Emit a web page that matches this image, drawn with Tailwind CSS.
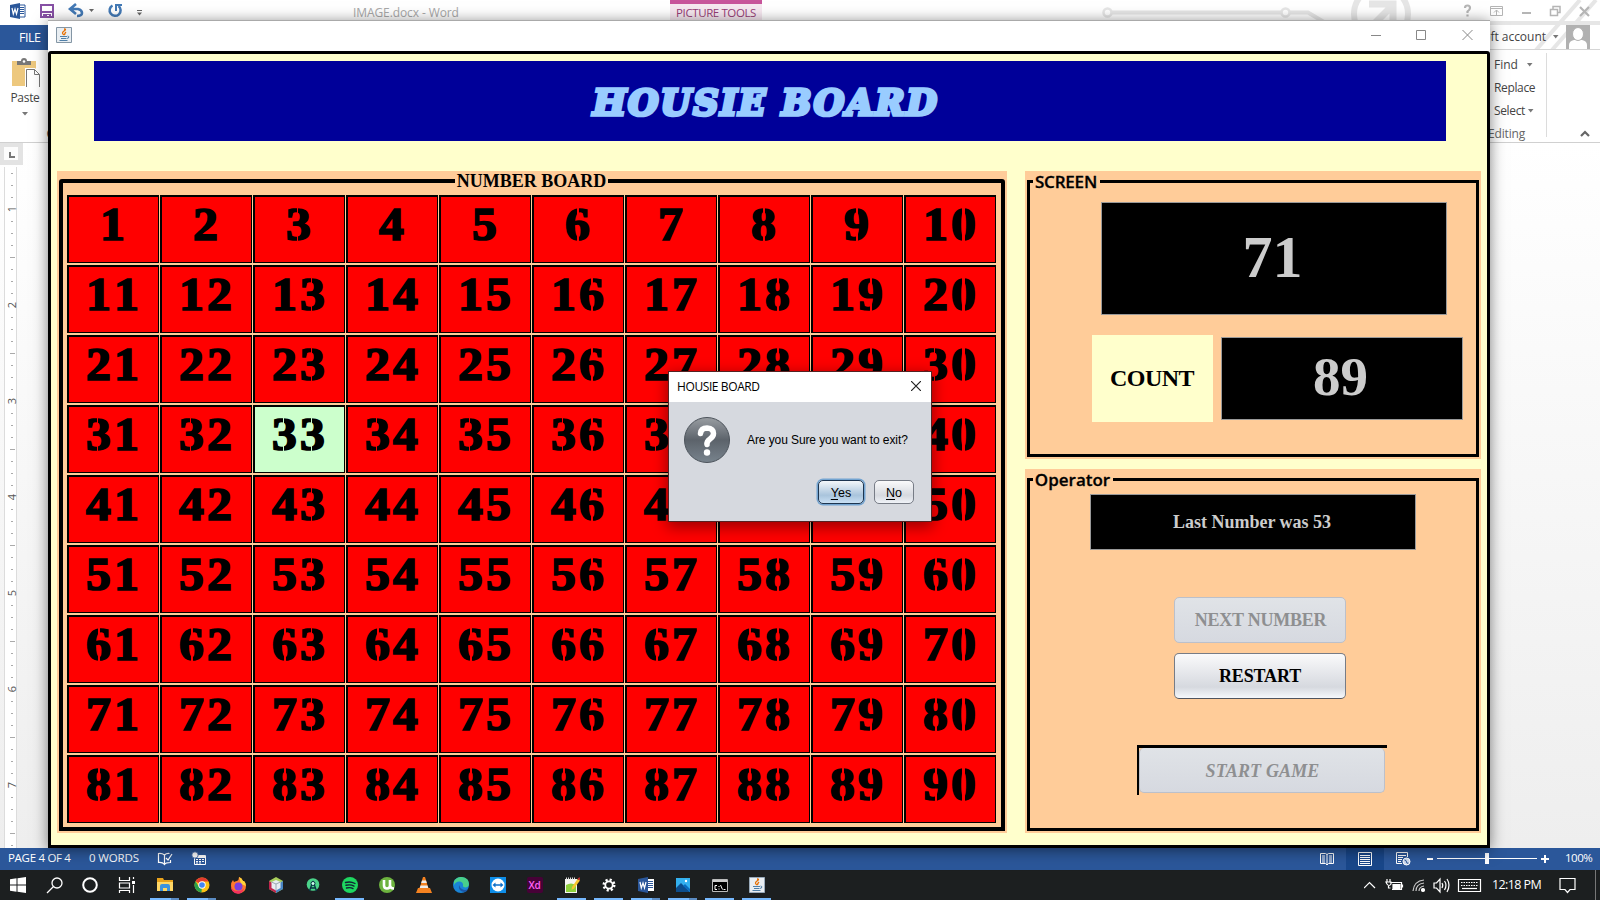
<!DOCTYPE html>
<html lang="en">
<head>
<meta charset="utf-8">
<title>Housie Board</title>
<script src="https://cdn.jsdelivr.net/npm/@tailwindcss/browser@4"></script>
</head>
<body class="relative w-[1600px] h-[900px] overflow-hidden bg-white font-['Open_Sans',sans-serif] text-[12px] text-[#444]">

<!-- Word window -->
<div class="flex flex-col h-[870px]">
  <header class="relative h-[25px] shrink-0 flex items-start bg-white">
    <svg class="absolute right-0 top-0" width="520" height="50" fill="none" stroke="#e6e6e6" stroke-width="4">
      <path d="M32 12.500H201M210 12.500H228L244 22M520 23H320Q312 23 312 32"/><circle cx="27.500" cy="12.500" r="4" stroke-width="2.500"/><circle cx="205.500" cy="12.500" r="4" stroke-width="2.500" fill="#fff"/>
      <circle cx="301" cy="14" r="27" stroke-width="6"/><path d="M286 32L311 7M289 4H313V24" stroke-width="7"/><path d="M456 50L500 0M472 50L516 0" stroke-width="4"/>
    </svg>
    <div class="flex items-start pt-[3px] pl-[10px]">
      <svg width="130" height="18" viewBox="0 0 130 18" fill="none">
        <path d="M8 2h7v12H8z" fill="#fff" stroke="#2b579a"/><path d="M9 4.500h5M9 6.500h5M9 8.500h5M9 10.500h5" stroke="#2b579a"/><path d="M0 2l10-2v16L0 14z" fill="#2b579a"/><path d="M2 5l1.300 6L5 6l1.500 5L8 5" stroke="#fff" stroke-width="1.200"/>
        <path d="M31 2h12v12H31z" fill="#fff" stroke="#8650a4" stroke-width="2"/><path d="M31 8h12v2H31zM33 11h8v4h-2v-3h-2v3h-4z" fill="#8650a4"/>
        <path d="M60 6h8q4 1 4 4t-5 3M66 1l-6 5 6 5" stroke="#4379b5" stroke-width="2.600"/><path d="M79 6h5l-2.500 3z" fill="#666"/>
        <path d="M102.500 2.500a5.500 5.500 0 1 0 6 .5" stroke="#4379b5" stroke-width="2.500"/><path d="M112 2h-6v6" stroke="#4379b5" stroke-width="2"/>
      </svg>
      <svg class="-ml-[3px]" width="8" height="18"><path d="M0 7.500h5" stroke="#666"/><path d="M0 9.500h5l-2.500 3z" fill="#666"/></svg>
    </div>
    <span class="ml-[208px] mt-[4px] leading-[17px] text-[#a8a8a8] whitespace-nowrap w-[106px] tracking-[-0.100px]">IMAGE.docx - Word</span>
    <div class="ml-[211px] w-[92px] h-[25px] bg-[#f6e8f0] border-t-4 border-[#c8559b] text-center text-[11.500px] leading-[18px] text-[#963d76] whitespace-nowrap tracking-[-0.400px]">PICTURE TOOLS</div>
    <svg class="absolute right-[6px] top-[4px]" width="132" height="16" fill="none" stroke="#b5b5b5" stroke-width="1.500">
      <path d="M3 4q0-2.500 2.500-2.500T8 4q0 1.500-2.500 3.500V9M5.500 10.500v2" stroke-width="2.200"/><path d="M28.500 2.500h12v9h-12zM28 4.500h13M34.500 11V6M32 8.500L34.500 6 37 8.500" stroke-width="1"/>
      <path d="M60 9h9" stroke-width="2"/><path d="M88.500 5.500h7v6h-7zM91 5V2.500h7v6h-2"/><path d="M118 3l9 9M127 3l-9 9" stroke-width="2.200"/>
    </svg>
  </header>
  <div class="h-[25px] shrink-0 flex items-center justify-between border-b border-[#d5d5d5] relative">
    <div class="bg-[#2b579a] text-white w-[60px] h-[25px] pl-[19px] text-[12.500px] leading-[25px] tracking-[-0.500px]">FILE</div>
    <div class="flex items-center gap-[7px] pr-[10px]"><span class="text-[#444] whitespace-nowrap tracking-[-0.020px]">Microsoft account</span><svg width="6" height="4"><path d="M0 0h5.500L2.700 3.500z" fill="#777"/></svg>
      <svg width="24" height="24"><path d="M0 0h24v24H0z" fill="#b1b1b1"/><path d="M3 24v-4q0-4 5-5h8q5 1 5 5v4z" fill="#fff"/><ellipse cx="12" cy="9" rx="5.500" ry="6.500" fill="#fff" stroke="#b1b1b1"/></svg></div>
  </div>
  <div class="h-[93px] shrink-0 flex justify-between border-b border-[#d0d0d0]">
    <div class="flex flex-col items-center w-[50px] pt-[8px]">
      <svg class="ml-[4px]" width="30" height="32"><path d="M0 3h24v25H0z" fill="#edc87e"/><path d="M5 7V3h4q0-3 3-3t3 3h4v4z" fill="#777"/><circle cx="12" cy="3.500" r="1.300" fill="#fff"/><path d="M13 10h10l6 6v15H13z" fill="#fff"/><path d="M14.500 11.500h8l5 5v13h-13z" fill="#fff" stroke="#777"/><path d="M22.500 11.500v5h5" fill="none" stroke="#777"/></svg>
      <span class="leading-[18px] text-[12px] tracking-[-0.300px] mt-[2px]">Paste</span>
      <svg class="mt-[5px] -ml-px" width="6" height="4"><path d="M0 0h6L3 3.500z" fill="#777"/></svg>
      <span class="self-end leading-[16px] mt-[10px] -mr-[4px]">C</span>
    </div>
    <div class="flex">
      <div class="w-[57px] border-r border-[#dcdcdc] mt-[3px] mb-[5px] mr-[-1px] flex flex-col text-[12px] leading-[23px] whitespace-nowrap">
        <span class="flex items-center gap-[9px] pl-[4px]">Find <svg width="6" height="4"><path d="M0 0h5.500L2.700 3.500z" fill="#777"/></svg></span>
        <span class="pl-[4px] tracking-[-0.350px]">Replace</span>
        <span class="flex items-center gap-[3px] pl-[4px] tracking-[-0.350px]">Select <svg width="6" height="4"><path d="M0 0h5.500L2.700 3.500z" fill="#777"/></svg></span>
        <span class="text-[#666] -ml-[2px] tracking-[-0.150px]">Editing</span>
      </div>
      <svg class="mt-[80px] ml-[34px] mr-[10px]" width="10" height="8"><path d="M1 6l4-4 4 4" fill="none" stroke="#666" stroke-width="2.200"/></svg>
    </div>
  </div>
  <div class="flex-1 min-h-0 bg-linear-to-b from-white to-[#eeeeee]">
    <svg id="ruler" width="50" height="705" font-family="Open Sans" font-size="11" fill="#555"><path d="M0 0h23v22H0z" fill="#e3e3e3"/><path d="M4 4h14v13H4z" fill="#fcfcfc"/><path d="M10 9v5h5" fill="none" stroke="#777" stroke-width="2"/><path d="M4 24h13v681H4z" fill="#fff"/><path d="M4.500 24v681M16.500 24v681" stroke="#dcdcdc"/></svg>
  </div>
  <footer class="h-[22px] shrink-0 bg-[#2b579a] text-white flex items-center justify-between text-[11.500px] leading-[16px] tracking-[-0.100px] whitespace-nowrap">
    <div class="flex items-center pl-[8px] gap-[17px]"><span class="w-[64px] -mt-[2px] tracking-[-0.300px]">PAGE 4 OF 4</span><span class="w-[51px] -mt-[2px] tracking-[-0.150px]">0 WORDS</span>
      <svg width="52" height="16" fill="none" stroke="#fff"><path d="M7.500 14V4Q5 2 1.500 2.500v9q4-.5 6 2 1-2 6-2V9M7.500 4q2-2 5-1.500M9 7l2 2 4-6" stroke-width="1.200"/><path d="M37.500 4.500h11v9h-11z"/><path d="M37 6h12" stroke-width="2"/><path d="M39 8.500h2M42 8.500h2M45 8.500h2M39 10.500h2M42 10.500h2M45 10.500h2M39 12h2M42 12h2"/><circle cx="38" cy="4" r="3.200" fill="#fff" stroke="#2b579a" stroke-width=".8"/></svg>
    </div>
    <div class="flex items-center h-full">
      <svg width="14" height="14" fill="none" stroke="#fff"><path d="M.5 1.500h5L7 2.500l1.500-1h5v10h-5L7 13l-1.500-1.500h-5zM7 2v10M2 4h3M2 6h3M2 8h3M2 10h3M9 4h3M9 6h3M9 8h3M9 10h3"/></svg>
      <div class="ml-[12px] w-[38px] h-full bg-[#19478a] flex items-center justify-center"><svg width="14" height="14" fill="none" stroke="#fff"><path d="M.5.500h13v13H.5zM2 3.500h10M2 5.500h10M2 7.500h10M2 9.500h10M2 11.500h10"/></svg></div>
      <svg class="ml-[12px]" width="15" height="14" fill="none" stroke="#fff"><path d="M11.500 5V.500H.5v11H6M2 3.500h8M2 5.500h5M2 7.500h4M2 9.500h3"/><circle cx="10.500" cy="9.500" r="3.500" fill="#cfdcf0"/><path d="M8.500 8q2 0 2 2t2 1" stroke="#2b579a"/></svg>
      <svg class="ml-[16px]" width="124" height="14"><path d="M0 6h6v2H0zM114 6h8v2h-8zM117 3h2v8h-2zM10 6h100v1H10zM58 1h4v11h-4z" fill="#fff"/></svg>
      <span class="ml-[14px] mr-[8px] -mt-[2px] w-[27px] tracking-[-0.500px]">100%</span>
    </div>
  </footer>
</div>

<!-- Taskbar -->
<div class="h-[30px] bg-[#1c1f20] flex items-stretch justify-between text-white">
  <div id="tasks" class="flex items-stretch">
    <div class="w-[36px] flex items-center justify-center"><svg width="16" height="16" fill="#fff"><path d="M0 2.200l6.500-.9v6.200H0zM7.500 1.200L16 0v7.500H7.500zM0 8.500h6.500v6.200L0 13.800zM7.500 8.500H16V16l-8.500-1.200z"/></svg></div>
    <div class="w-[36px] flex items-center justify-center"><svg width="17" height="17" fill="none" stroke="#fff" stroke-width="1.300"><circle cx="11" cy="6" r="5"/><path d="M7.500 9.500L1 16"/></svg></div>
    <div class="w-[36px] flex items-center justify-center"><svg width="16" height="16"><circle cx="8" cy="8" r="6.800" fill="none" stroke="#fff" stroke-width="2"/></svg></div>
    <div class="w-[38px] flex items-center justify-center"><svg width="18" height="16" fill="none" stroke="#fff" stroke-width="1.200"><path d="M1.500 0v3.500h10V0M1.500 6h10v5h-10zM1.500 16v-2.500h10V16M15.500 0v2M15.500 8v8"/><path d="M14 4h3v3h-3z" fill="#fff" stroke="none"/></svg></div>
    <div class="w-[37px] relative flex items-center justify-center"><svg width="16" height="16"><path d="M0 1h6l1 2h9v4H0z" fill="#e9a21b"/><path d="M0 5h16v9H0z" fill="#ffd765"/><path d="M3 14V9q0-2 2-2h6q2 0 2 2v5h-3v-3H6v3z" fill="#3c93de"/></svg><i class="absolute bottom-0 inset-x-[4px] h-[2px] bg-[#76b9ff] border-r-8 border-[#5b8cc4]"></i></div>
    <div class="w-[37px] relative flex items-center justify-center"><svg width="16" height="16"><circle cx="8" cy="8" r="7.500" fill="#fbc116"/><path d="M8 8L1.500 4.200A7.500 7.500 0 0 1 14.700 4.600H8z" fill="#e33b2e"/><path d="M8 8l-.5 7.500A7.500 7.500 0 0 1 1.500 4.200L5 10z" fill="#29a04c"/><circle cx="8" cy="8" r="3.700" fill="#fff"/><circle cx="8" cy="8" r="2.800" fill="#4285f4"/></svg><i class="absolute bottom-0 inset-x-[4px] h-[2px] bg-[#76b9ff] border-r-8 border-[#5b8cc4]"></i></div>
    <div class="w-[37px] flex items-center justify-center"><svg width="17" height="17"><path d="M1 9q0-4 2-6l1 2q2-1 3-1 2-1 2-4 3 1 4 4l1 0q2 2 2 5 0 7-7.500 7.500Q1 16 1 9z" fill="#ff7a2b"/><path d="M9 0q3 1 4 4l1 0q2 2 2 5L11 7z" fill="#ffd43a"/><circle cx="8.500" cy="9.500" r="4" fill="#7a3fe0"/><path d="M1 9q1 5 7 5 4 0 6-3-1 6-6.500 5.800Q1 16 1 9z" fill="#f5315e"/></svg></div>
    <div class="w-[37px] flex items-center justify-center"><svg width="16" height="16"><path d="M8 0l7 4v8l-7 4-7-4V4z" fill="#a9cf5b"/><path d="M1 4l7 4v8l-7-4z" fill="#c0244e"/><path d="M15 4L8 8v8l7-4z" fill="#4a86c5"/><path d="M8 3l4.500 2v6L8 13.500 3.500 11V5z" fill="#e8edf2"/><path d="M3.500 5L8 7v6.500M8 7l4.500-2" fill="none" stroke="#9aa7b3"/></svg></div>
    <div class="w-[37px] flex items-center justify-center"><svg width="14" height="16"><circle cx="7" cy="7.500" r="6.300" fill="#4bd38a"/><path d="M7 4L3.500 14M7 4l3.500 10M4.500 11h5" stroke="#073042" stroke-width="1.300" fill="none"/><circle cx="7" cy="6.500" r="2" fill="#cfe" stroke="#073042"/></svg></div>
    <div class="w-[37px] relative flex items-center justify-center"><svg width="16" height="16"><circle cx="8" cy="8" r="8" fill="#1ed760"/><path d="M3.500 5.500q5-1.500 9.500 1M4 8.300q4.500-1.200 8 .8M4.500 11q4-1 6.500.6" fill="none" stroke="#123" stroke-width="1.400" stroke-linecap="round"/></svg><i class="absolute bottom-0 inset-x-[4px] h-[2px] bg-[#76b9ff]"></i></div>
    <div class="w-[37px] flex items-center justify-center"><svg width="16" height="16"><circle cx="8" cy="8" r="8" fill="#6db33f"/><path d="M5 3v5.500q0 3 3 3t3-3V3M11 8.500q0 3 4 3" fill="none" stroke="#fff" stroke-width="2.600"/></svg></div>
    <div class="w-[37px] flex items-center justify-center"><svg width="16" height="16"><path d="M2 11h12l2 5H0z" fill="#f58220"/><path d="M7 0h2l4 13H3z" fill="#f58220"/><path d="M6 3.500h4l.8 2.500H5.200zM4.500 8.500h7l.8 2.500H3.700z" fill="#eee"/></svg></div>
    <div class="w-[37px] flex items-center justify-center"><svg width="16" height="16"><circle cx="8" cy="8" r="8" fill="#1a84d6"/><path d="M1 4Q4-.500 9 0q7 1 7 7 0 3-3.500 3.500-3 0-2.500-2 .5-3-3-4Q3 4 1 8z" fill="#48cf8b"/><path d="M6 8q-1 6 5 7 3 0 4-3-3 2-6 0-2-1-3-4z" fill="#1b57a8"/></svg></div>
    <div class="w-[37px] flex items-center justify-center"><svg width="16" height="16"><path d="M0 0h16v16H0z" fill="#0e8ee9"/><circle cx="8" cy="8" r="6.500" fill="#fff"/><path d="M2.500 8l3-2.500v1.700h5V5.500l3 2.500-3 2.500V8.800h-5v1.700z" fill="#0e6fc9"/></svg></div>
    <div class="w-[37px] flex items-center justify-center"><span class="w-[16px] h-[16px] rounded-[2px] bg-[#470137] text-[#ff61f6] text-[10px] leading-[16px] text-center font-semibold tracking-[-0.300px]">Xd</span></div>
    <div class="w-[37px] relative flex items-center justify-center"><svg width="16" height="16"><path d="M1 2h12v14H1z" fill="#f5f5f0"/><path d="M2 8q5-3 10 0v7H2z" fill="#8ed13c"/><path d="M2 1.500h10" stroke="#ddd" stroke-width="2" stroke-dasharray="1 1"/><path d="M13.500 2L8 10l-.5 3 2.500-1.500L16 3.500z" fill="#f7c62f"/><path d="M13.500 2L16 3.500 15.500 0z" fill="#d33"/></svg><i class="absolute bottom-0 inset-x-[4px] h-[2px] bg-[#76b9ff]"></i></div>
    <div class="w-[37px] relative flex items-center justify-center"><svg width="14" height="14"><circle cx="7" cy="7" r="5.200" fill="none" stroke="#fff" stroke-width="2.600" stroke-dasharray="2.100 1.980"/><circle cx="7" cy="7" r="3.700" fill="none" stroke="#fff" stroke-width="1.800"/></svg><i class="absolute bottom-0 inset-x-[4px] h-[2px] bg-[#76b9ff]"></i></div>
    <div class="w-[37px] relative flex items-center justify-center"><svg width="16" height="16"><path d="M8 2h8v12H8z" fill="#fff"/><path d="M10 4.500h5M10 6.500h5M10 8.500h5M10 10.500h5" stroke="#2b579a"/><path d="M0 2l10-2v16L0 14z" fill="#2b579a"/><path d="M2 5l1.300 6L5 6l1.500 5L8 5" stroke="#fff" fill="none" stroke-width="1.200"/></svg><i class="absolute bottom-0 inset-x-[4px] h-[2px] bg-[#76b9ff] border-r-8 border-[#5b8cc4]"></i></div>
    <div class="w-[37px] relative flex items-center justify-center"><svg width="14" height="14"><path d="M0 0h14v14H0z" fill="#33b1f0"/><path d="M0 10l5-5 9 9H0z" fill="#0d4d8c"/><path d="M7 8l2-2 5 5v3z" fill="#0a6cc0"/><circle cx="10" cy="3" r="1.200" fill="#fff"/></svg><i class="absolute bottom-0 inset-x-[4px] h-[2px] bg-[#76b9ff] border-r-8 border-[#5b8cc4]"></i></div>
    <div class="w-[37px] relative flex items-center justify-center"><svg width="16" height="13" fill="none" stroke="#fff"><path d="M.5.500h15v12H.5z" fill="#000" stroke="#bbb"/><path d="M1 2h14" stroke="#ccc" stroke-width="2"/><path d="M5 6.500H3v4h2M7 7v1M7 9.500v1M8.500 6l2 4.500M11.500 10.500h2"/></svg><i class="absolute bottom-0 inset-x-[4px] h-[2px] bg-[#76b9ff]"></i></div>
    <div class="w-[37px] relative flex items-center justify-center"><svg width="16" height="16" fill="none"><path d="M.5.500h15v15H.5z" fill="#e9eef2" stroke="#9ab"/><path d="M8 8Q5 6 8 4t0-2M9 8q-1-1 1-3" stroke="#e76f00" stroke-width="1.300"/><path d="M4 9.500h7M5 11.500h5M3.500 13.500h8M11.500 9q2 0 1 2l-2 .5" stroke="#4f7fa8"/></svg><i class="absolute bottom-0 inset-x-[4px] h-[2px] bg-[#76b9ff]"></i></div>
  </div>
  <div class="flex items-center">
    <svg width="120" height="18" fill="none" stroke="#fff" stroke-width="1.200">
      <path d="M0 12l5.500-5.500L11 12"/><path d="M26.500 6.500h11v7H28"/><path d="M29 8.500h7v4h-7z" fill="#fff"/><path d="M38.500 8.500v3M22 6h5v2q-2 3-4 0zM23 3v3M26 3v3M24.500 9v3h2"/>
      <path d="M49 15Q50 5 60 4M52 15q0-7 8-8M55 15q0-4 5-5" stroke="#ccc"/><circle cx="59" cy="14" r="1.500" fill="#fff"/>
      <path d="M70 7h2.500l3.500-4v13l-3.500-4H70zM78 7q1.500 2 0 5M80.500 5q3 4 0 9M83 3q4 6 0 13"/>
      <path d="M94.500 3.500h22v12h-22z"/><path d="M97 6.500h17M97 9.500h17" stroke-dasharray="1.500 1"/><path d="M98 12.500h15"/>
    </svg>
    <span class="ml-[8px] w-[49px] text-[12.500px] tracking-[-0.600px] whitespace-nowrap">12:18 PM</span>
    <svg class="ml-[18px] mr-[19px]" width="17" height="17" fill="none" stroke="#fff" stroke-width="1.200"><path d="M1 1.500h15v11h-5L8.500 15.500 6 12.500H1z"/></svg>
    <i class="w-px h-full bg-[#777] mr-[4px]"></i>
  </div>
</div>

<!-- Housie window -->
<div class="absolute left-[48px] top-[20px] w-[1442px] h-[828px] flex flex-col bg-white border-t border-[#aaa] text-black shadow-[0_2px_14px_rgba(0,0,0,0.5)]">
  <div class="h-[30px] shrink-0 flex items-center justify-between pl-[8px] pr-[16px] pb-[2px]">
    <svg width="16" height="16" fill="none"><path d="M.5.500h15v15H.5z" fill="#e9eef2" stroke="#8496a5"/><path d="M8 8Q5 6 8 4t0-2M9 8q-1-1 1-3" stroke="#e76f00" stroke-width="1.300"/><path d="M4 9.500h7M5 11.500h5M3.500 13.500h8M11.500 9q2 0 1 2l-2 .5" stroke="#4f7fa8"/></svg>
    <svg width="103" height="12" fill="none" stroke="#888"><path d="M0 6.500h10M45.500 1.500h9v9h-9zM91.500 1l10 10M101.500 1l-10 10"/></svg>
  </div>
  <main class="flex-1 min-h-0 border-3 border-black rounded-t-[3px] bg-[#ffffcc] flex flex-col">
    <h1 class="mt-[7px] ml-[43px] w-[1352px] h-[80px] bg-[#000099] text-[#99ccff] flex items-center justify-center pr-[8px] pt-[5px] font-['DejaVu_Serif',serif] font-bold italic text-[35px] whitespace-nowrap tracking-[2px] [-webkit-text-stroke:3.600px_#99ccff]">HOUSIE BOARD</h1>
    <div class="flex mt-[30px] ml-[6px]">
      <section class="w-[950px] h-[662px] bg-[#ffcc99] pt-[8px] pl-[2px]">
        <div class="relative w-[946px] h-[652px] border-4 border-black rounded-t-[3px] pl-[4px] pt-[12px]">
          <h2 class="absolute left-[392px] -top-[11px] w-[153px] h-[20px] bg-[#ffcc99] text-center font-['Liberation_Serif',serif] font-bold text-[18px] leading-[19px] whitespace-nowrap">NUMBER BOARD</h2>
          <div id="board" class="grid grid-cols-[repeat(10,92px)] gap-x-px gap-y-[2px]"></div>
        </div>
      </section>
      <div class="ml-[18px] flex flex-col gap-[10px]">
        <section class="w-[456px] h-[288px] bg-[#ffcc99] pt-[9px] pl-[2px]">
          <div class="relative w-[452px] h-[277px] border-3 border-black flex flex-col pt-[19px]">
            <h2 class="absolute left-[3px] -top-[11px] w-[67px] h-[20px] bg-[#ffcc99] text-center pr-px font-['Open_Sans',sans-serif] font-semibold text-[17px] leading-[20px] whitespace-nowrap tracking-[-0.200px] [-webkit-text-stroke:0.300px_black]">SCREEN</h2>
            <div class="ml-[71px] w-[346px] h-[113px] shrink-0 bg-black border border-[#999] text-[#ccc] text-center pr-[3px] font-['Liberation_Serif',serif] font-bold text-[60px] leading-[109px]">71</div>
            <div class="ml-[62px] mt-[20px] flex items-start gap-[8px]">
              <div class="w-[121px] h-[87px] bg-[#ffffcc] text-center pr-px font-['Liberation_Serif',serif] font-bold text-[24px] leading-[86px] tracking-[-0.500px]">COUNT</div>
              <div class="mt-[2px] w-[242px] h-[83px] bg-black border border-[#999] text-[#ccc] text-center pr-[3px] font-['Liberation_Serif',serif] font-bold text-[55px] leading-[77px]">89</div>
            </div>
          </div>
        </section>
        <section class="w-[456px] h-[364px] bg-[#ffcc99] pt-[9px] pl-[2px]">
          <div class="relative w-[452px] h-[353px] border-3 border-black flex flex-col pt-[13px] font-['Liberation_Serif',serif] font-bold text-[18px]">
            <h2 class="absolute left-[3px] -top-[11px] w-[80px] h-[20px] bg-[#ffcc99] text-center pr-px font-['Open_Sans',sans-serif] font-semibold text-[17px] leading-[20px] whitespace-nowrap [-webkit-text-stroke:0.300px_black]">Operator</h2>
            <div class="ml-[60px] w-[326px] h-[56px] shrink-0 bg-black border border-[#999] text-[#ccc] text-center pr-[2px] leading-[54px]">Last Number was 53</div>
            <div class="ml-[144px] mt-[47px] w-[172px] h-[46px] shrink-0 rounded-[5px] border border-[#bcc0ca] bg-linear-to-b from-[#e0e3e7] to-[#d6d9e0] text-[#8e8f91] text-center pl-px leading-[44px] tracking-[-0.250px]">NEXT NUMBER</div>
            <div class="ml-[144px] mt-[10px] w-[172px] h-[46px] shrink-0 rounded-[5px] border border-[#777c86] border-b-[#4f545f] bg-linear-to-b from-[#fafafb] via-[#d6d9df] via-75% to-[#f5f8fc] text-center leading-[45px] tracking-[-0.150px]">RESTART</div>
            <div class="ml-[107px] mt-[46px] w-[250px] h-[50px] shrink-0 border-t-3 border-l-2 border-black pr-[2px]">
              <div class="h-[45px] rounded-[5px] border border-t-0 border-[#bcc0ca] bg-linear-to-b from-[#e0e3e7] to-[#d6d9e0] text-[#8e8f91] text-center pl-px italic leading-[46px] tracking-[0.150px]">START GAME</div>
            </div>
          </div>
        </section>
      </div>
    </div>
  </main>
</div>

<!-- Exit confirmation -->
<div class="absolute left-[669px] top-[372px] w-[262px] h-[149px] bg-[#d6d9df] text-black outline outline-[#552222] shadow-[0_4px_14px_2px_rgba(0,0,0,0.4)] flex flex-col">
  <div class="h-[30px] shrink-0 bg-white flex items-center justify-between pl-[8px] pr-[10px]"><span class="text-[12px] tracking-[-0.400px]">HOUSIE BOARD</span><svg class="-mt-[2px]" width="10" height="10" stroke="#222" stroke-width="1.200"><path d="M0 0l10 10M10 0L0 10"/></svg></div>
  <div class="flex items-center pt-[14px] pl-[14px] font-['Liberation_Sans',sans-serif]">
    <svg width="48" height="48" viewBox="0 0 48 48"><defs><linearGradient id="qg" x2="0" y2="1"><stop stop-color="#999da2"/><stop offset=".5" stop-color="#5c636b"/><stop offset="1" stop-color="#78838d"/></linearGradient></defs><circle cx="24" cy="24" r="22.500" fill="url(#qg)" stroke="#4d545c"/><path d="M17.500 17.500q.5-5.500 6.500-5.500 6.500.5 6.500 5.500 0 3-3.500 5.500T24 28.500" fill="none" stroke="#fff" stroke-width="5.500" stroke-linecap="round"/><circle cx="24" cy="36.500" r="3.200" fill="#fff"/></svg>
    <span class="ml-[16px] text-[12px] whitespace-nowrap tracking-[-0.090px]">Are you Sure you want to exit?</span>
  </div>
  <div class="flex items-start mt-[14px] pl-[149px] gap-[10px] font-['Liberation_Sans',sans-serif] text-[12.500px] text-center">
    <div class="mt-[2px] w-[46px] h-[24px] rounded-[5px] border border-[#1d3550] shadow-[0_0_0_1.500px_#73a4d1] bg-linear-to-b from-[#f3f7fa] via-[#a9c4dc] via-65% to-[#c9e0f4] leading-[24px]"><u class="underline-offset-2">Y</u>es</div>
    <div class="mt-[2px] w-[40px] h-[24px] rounded-[5px] border border-[#777c86] bg-linear-to-b from-[#fafafb] via-[#d6d9df] via-65% to-[#f0f3f8] leading-[24px]"><u class="underline-offset-2">N</u>o</div>
  </div>
</div>

<script>
  // Called numbers are shown in mint; every digit gets the stencil bridges its shape needs.
  const board = document.getElementById('board');
  const called = [33];
  for (let n = 1; n <= 90; n++) {
    const on = called.includes(n);
    const cell = document.createElement('div');
    cell.className = 'h-[68px] border-t-2 border-l-2 border-r border-b border-black flex justify-center pt-[6px] pr-[2px] ' + (on ? 'bg-[#ccffcc]' : 'bg-[#ff0000]');
    const ink = on ? 'bg-[#ccffcc]' : 'bg-[#ff0000]';
    for (const d of String(n)) {
      let cuts = '';
      if (d === '0') cuts = `<i class="absolute left-[12.500px] top-[3px] w-[3px] h-[38px] ${ink}"></i>`;
      if ('689'.includes(d)) cuts = `<i class="absolute left-[13px] top-[3px] w-[2px] h-[11px] ${ink}"></i><i class="absolute left-[13px] top-[29px] w-[2px] h-[12px] ${ink}"></i>`;
      if (d === '3') cuts = `<i class="absolute left-[12px] top-[3px] w-px h-[7px] ${ink}"></i><i class="absolute left-[12px] top-[33px] w-px h-[8px] ${ink}"></i>`;
      cell.innerHTML += `<span class="relative w-[28px] h-[44px] text-center"><b class="inline-block scale-x-[1.080] font-['Liberation_Serif',serif] font-bold text-[46px] leading-[44px] [-webkit-text-stroke:1.700px_black]">${d}</b>${cuts}</span>`;
    }
    board.append(cell);
  }
  // Vertical ruler: eight divisions per inch, numbered at each inch.
  const ruler = document.getElementById('ruler');
  let marks = '';
  for (let i = -3; i < 54; i++) {
    const y = 66 + i * 12;
    if (i % 8 === 0) marks += `<text transform="translate(15.500 ${y}) rotate(-90)" text-anchor="middle">${i / 8 + 1}</text>`;
    else marks += Math.abs(i % 8) === 4 ? `<path d="M10 ${y}h5v1h-5z" fill="#aaa"/>` : `<path d="M11 ${y}h2v1h-2z" fill="#aaa"/>`;
  }
  ruler.innerHTML += marks;
</script>
</body>
</html>
